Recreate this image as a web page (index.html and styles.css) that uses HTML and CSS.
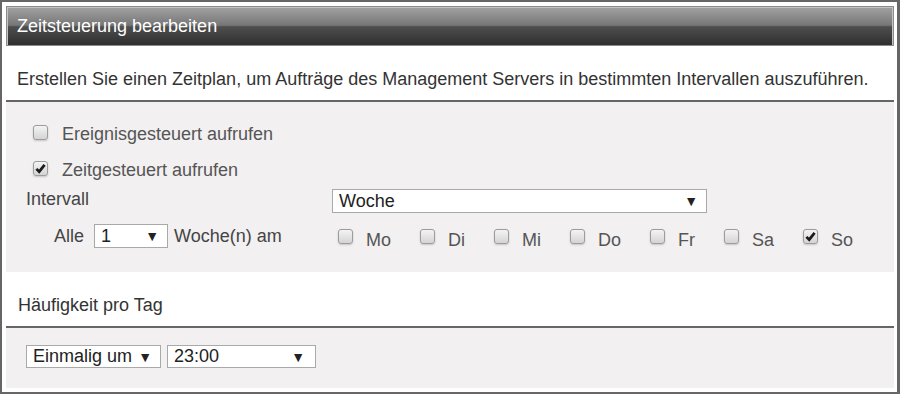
FILE: index.html
```html
<!DOCTYPE html>
<html lang="de">
<head>
   <meta charset="UTF-8">
   <title>Zeitsteuerung bearbeiten</title>
   <link rel="stylesheet" href="styles.css">
</head>
<body>
   <div class="frame">
      <div class="titlebar">Zeitsteuerung bearbeiten</div>

      <p class="section-head">Erstellen Sie einen Zeitplan, um Aufträge des Management Servers in bestimmten Intervallen auszuführen.</p>

      <div class="panel panel-main">
         <div class="check-row">
            <span class="cb"></span>
            <span class="lbl">Ereignisgesteuert aufrufen</span>
         </div>
         <div class="check-row">
            <span class="cb checked"><svg viewBox="0 0 14 14"><path d="M2.6 7.4 L5.6 10.4 L11.4 3.2" /></svg></span>
            <span class="lbl">Zeitgesteuert aufrufen</span>
         </div>
         <div class="field-row interval-row">
            <div class="left-col"><span class="lbl-dark">Intervall</span></div>
            <div class="sel sel-wide"><span>Woche</span><span class="arrow">▼</span></div>
         </div>
         <div class="field-row every-row">
            <div class="left-col every">
               <span class="lbl-dark">Alle</span>
               <div class="sel sel-num"><span>1</span><span class="arrow">▼</span></div>
               <span class="lbl-dark">Woche(n) am</span>
            </div>
            <div class="days">
               <div class="day"><span class="cb"></span><span class="lbl">Mo</span></div>
               <div class="day"><span class="cb"></span><span class="lbl">Di</span></div>
               <div class="day"><span class="cb"></span><span class="lbl">Mi</span></div>
               <div class="day"><span class="cb"></span><span class="lbl">Do</span></div>
               <div class="day"><span class="cb"></span><span class="lbl">Fr</span></div>
               <div class="day"><span class="cb"></span><span class="lbl">Sa</span></div>
               <div class="day"><span class="cb checked"><svg viewBox="0 0 14 14"><path d="M2.6 7.4 L5.6 10.4 L11.4 3.2" /></svg></span><span class="lbl">So</span></div>
            </div>
         </div>
      </div>

      <p class="section-head sub">Häufigkeit pro Tag</p>

      <div class="panel panel-freq">
         <div class="sel sel-mode"><span>Einmalig um</span><span class="arrow">▼</span></div>
         <div class="sel sel-time"><span>23:00</span><span class="arrow">▼</span></div>
      </div>
   </div>
</body>
</html>
```

FILE: styles.css
```css
* {
   padding: 0;
   margin: 0;
   box-sizing: border-box;
}
body {
   font-family: "Liberation Sans", Arial, sans-serif;
   background: #fff;
}

/** Cadre */
.frame {
   width: 900px;
   height: 394px;
   border: 2px solid #666;
   border-right-width: 3px;
   padding: 4px 3px 4px 4px;
   background: #fff;
}
.titlebar {
   height: 40px;
   border: 1px solid #8a8a8a;
   box-shadow: inset 1px 1px 0 #c4c4c4, inset -1px 0 0 #c4c4c4;
   background: linear-gradient(#a2a2a2 0%, #777 48%, #4e4e4e 52%, #2f2f2f 100%);
   color: #fff;
   font-size: 18px;
   line-height: 38px;
   padding-left: 10px;
}
.section-head {
   font-size: 18px;
   line-height: 20px;
   color: #333;
   padding: 23px 11px 11px;
}
.section-head.sub {
   padding-left: 12px;
}

/** Panneaux gris */
.panel {
   background: #f2f0f1;
   border-top: 2px solid #666;
   font-size: 18px;
}
.panel-main {
   height: 172px;
   padding: 12px 0 0 20px;
}
.panel-freq {
   height: 62px;
   padding: 17px 0 0 20px;
   display: flex;
   gap: 6px;
}

/** Cases */
.check-row {
   height: 36px;
   display: flex;
   align-items: center;
   padding-left: 7px;
   gap: 14px;
}
.check-row .lbl {
   padding-top: 3px;
}
.cb {
   width: 15px;
   height: 15px;
   flex: none;
   border: 1px solid #9c9c9c;
   border-radius: 3px;
   background: linear-gradient(#f4f4f4, #d4d4d4);
   box-shadow: 0 1px 2px rgba(0,0,0,0.18);
   display: flex;
   align-items: center;
   justify-content: center;
}
.cb svg {
   width: 13px;
   height: 13px;
}
.cb path {
   fill: none;
   stroke: #1a1a1a;
   stroke-width: 3;
}
.lbl {
   color: #555;
   line-height: 20px;
}
.lbl-dark {
   color: #444;
   line-height: 20px;
}

/** Lignes de champs */
.field-row {
   display: flex;
   height: 24px;
}
.interval-row {
   margin-top: 3px;
}
.every-row {
   margin-top: 11px;
   align-items: center;
}
.left-col {
   width: 306px;
   flex: none;
}
.every {
   display: flex;
   align-items: center;
   padding-left: 28px;
   gap: 10px;
}
.every .sel-num + .lbl-dark {
   margin-left: -4px;
}
.days {
   display: flex;
   align-items: center;
   padding-left: 6px;
   gap: 29px;
}
.day {
   display: flex;
   align-items: center;
   gap: 13px;
}
.day .lbl {
   padding-top: 8px;
}

/** Listes */
.sel {
   display: flex;
   align-items: center;
   justify-content: space-between;
   height: 24px;
   background: #fff;
   border: 1px solid #a9a9a9;
   color: #222;
   padding: 0 8px 0 6px;
   font-size: 18px;
}
.arrow {
   font-size: 14px;
   color: #222;
}
.sel-wide { width: 375px; }
.sel-num { width: 74px; }
.sel-mode { width: 135px; height: 23px; }
.sel-time { width: 149px; height: 23px; padding-right: 10px; }
```
